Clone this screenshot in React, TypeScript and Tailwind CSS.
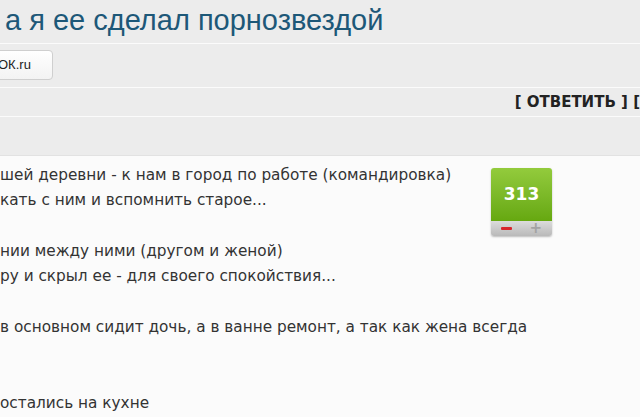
import { useState } from "react";

const postLines: (string | null)[] = [
  "шей деревни - к нам в город по работе (командировка)",
  "кать с ним и вспомнить старое...",
  null,
  "нии между ними (другом и женой)",
  "ру и скрыл ее - для своего спокойствия...",
  null,
  " в основном сидит дочь, а в ванне ремонт, а так как жена всегда",
  null,
  null,
  "остались на кухне",
];

function Rating({ score }: { score: number }) {
  return (
    <div className="w-[61px] rounded-[3px] overflow-hidden shadow-[0_1px_2px_rgba(0,0,0,0.25)]">
      <div className="h-[53px] flex items-center justify-center bg-gradient-to-b from-[#93cb3c] to-[#66a80f]">
        <span className="text-white font-bold text-[17px] [font-family:'DejaVu_Sans',Verdana,sans-serif]">
          {score}
        </span>
      </div>
      <div className="h-[15px] flex items-center justify-between px-[10px] bg-gradient-to-b from-[#dcdcdc] to-[#b9b9b9]">
        <span className="block w-[11px] h-[3px] bg-[#d8262c] rounded-[1px]" />
        <span className="text-[#a3a3a3] text-[15px] leading-none font-bold [font-family:'DejaVu_Sans',sans-serif]">
          +
        </span>
      </div>
    </div>
  );
}

export default function App() {
  const [score] = useState(313);

  return (
    <div className="w-[640px] h-[417px] overflow-hidden bg-[#ececec]">
      {/* Title */}
      <div className="h-[44px] pl-[5px] pt-[3px] border-b border-[#fbfbfb]">
        <h1 className="text-[29px] leading-[34px] text-[#1d5878] whitespace-nowrap [font-family:'Liberation_Sans',Arial,sans-serif]">
          а я ее сделал порнозвездой
        </h1>
      </div>

      {/* Share buttons */}
      <div className="h-[44px] pt-[6px] border-b border-[#fbfbfb]">
        <button
          type="button"
          className="h-[30px] w-[57px] -ml-[4px] rounded-[4px] border border-[#cfcfcf] bg-gradient-to-b from-[#ffffff] to-[#f3f3f3] text-left text-[13px] text-[#222] [font-family:'Liberation_Sans',Arial,sans-serif]"
        >
          <span className="ml-[1px]">ОК.ru</span>
        </button>
      </div>

      {/* Actions */}
      <div className="h-[29px] flex items-center justify-end border-b border-[#fbfbfb]">
        <span className="font-bold text-[15px] text-[#222] whitespace-nowrap [font-family:'DejaVu_Sans',Tahoma,sans-serif]">
          [ ОТВЕТИТЬ ] [
        </span>
      </div>

      <div className="h-[38px]" />

      {/* Post body */}
      <div className="bg-[#fbfbfb] border-t border-[#e2e2e2] h-[300px] flex">
        <div className="w-[491px] pt-[7px] text-[15.3px] leading-[25.3px] text-[#333] whitespace-nowrap [font-family:'DejaVu_Sans',Verdana,sans-serif]">
          {postLines.map((line, i) =>
            line ? <div key={i}>{line}</div> : <div key={i} className="h-[25.3px]" />
          )}
        </div>
        <div className="pt-[12px]">
          <Rating score={score} />
        </div>
      </div>
    </div>
  );
}
